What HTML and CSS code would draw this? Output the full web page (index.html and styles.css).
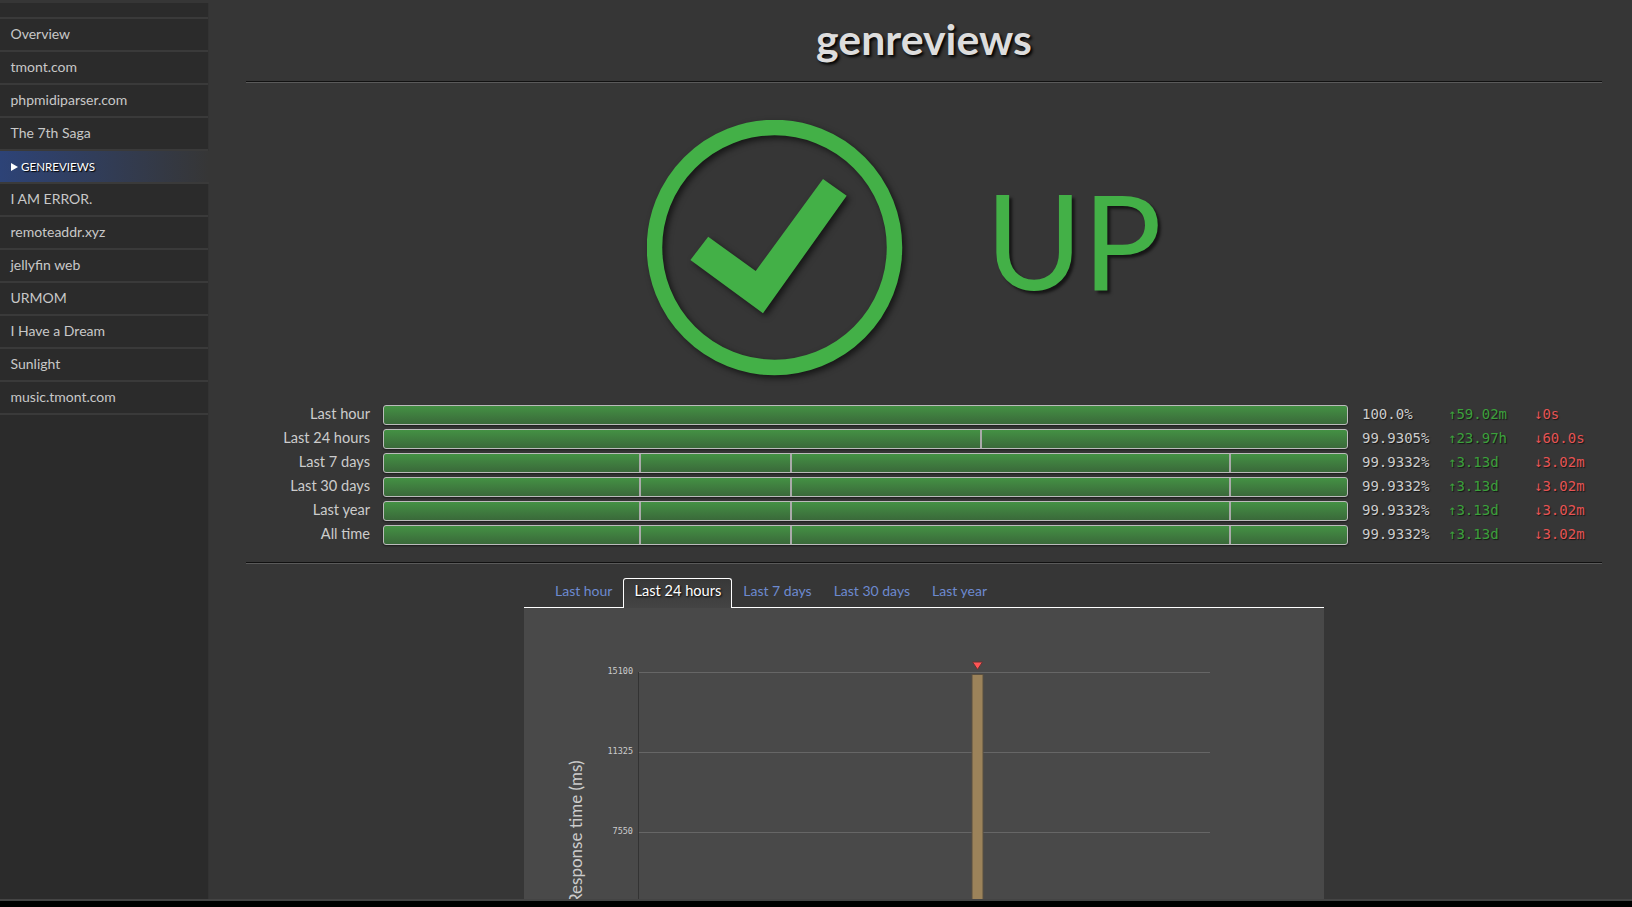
FILE: index.html
```html
<!DOCTYPE html>
<html lang="en">
<head>
<meta charset="utf-8">
<title>genreviews</title>
<link rel="stylesheet" href="styles.css">
</head>
<body>
<div class="app">
  <nav class="sidebar">
    <div class="nav-stub"></div>
    <a class="nav-item">Overview</a>
    <a class="nav-item">tmont.com</a>
    <a class="nav-item">phpmidiparser.com</a>
    <a class="nav-item">The 7th Saga</a>
    <a class="nav-item nav-active"><span class="nav-arrow"></span>GENREVIEWS</a>
    <a class="nav-item">I AM ERROR.</a>
    <a class="nav-item">remoteaddr.xyz</a>
    <a class="nav-item">jellyfin web</a>
    <a class="nav-item">URMOM</a>
    <a class="nav-item">I Have a Dream</a>
    <a class="nav-item">Sunlight</a>
    <a class="nav-item">music.tmont.com</a>
  </nav>
  <main class="main">
    <h1 class="title">genreviews</h1>
    <div class="rule"></div>
    <section class="status">
      <svg class="status-icon" width="256" height="256" viewBox="0 0 256 256">
        <circle cx="127.5" cy="127.5" r="120" fill="none" stroke="#43b047" stroke-width="15.5"/>
        <path fill="#43b047" d="M176 59 L199.700 75.700 L116 193.300 L43.400 140 L61.200 116.700 L108.700 151 Z"/>
      </svg>
      <div class="status-text">UP</div>
    </section>
    <section class="stats">
      <div class="stat-label">Last hour</div>
      <div class="stat-bar"></div>
      <div class="stat-pct">100.0%</div>
      <div class="stat-up">↑59.02m</div>
      <div class="stat-down">↓0s</div>

      <div class="stat-label">Last 24 hours</div>
      <div class="stat-bar"><i class="tick" style="left:61.9%"></i></div>
      <div class="stat-pct">99.9305%</div>
      <div class="stat-up">↑23.97h</div>
      <div class="stat-down">↓60.0s</div>

      <div class="stat-label">Last 7 days</div>
      <div class="stat-bar"><i class="tick" style="left:26.45%"></i><i class="tick" style="left:42.15%"></i><i class="tick" style="left:87.75%"></i></div>
      <div class="stat-pct">99.9332%</div>
      <div class="stat-up">↑3.13d</div>
      <div class="stat-down">↓3.02m</div>

      <div class="stat-label">Last 30 days</div>
      <div class="stat-bar"><i class="tick" style="left:26.45%"></i><i class="tick" style="left:42.15%"></i><i class="tick" style="left:87.75%"></i></div>
      <div class="stat-pct">99.9332%</div>
      <div class="stat-up">↑3.13d</div>
      <div class="stat-down">↓3.02m</div>

      <div class="stat-label">Last year</div>
      <div class="stat-bar"><i class="tick" style="left:26.45%"></i><i class="tick" style="left:42.15%"></i><i class="tick" style="left:87.75%"></i></div>
      <div class="stat-pct">99.9332%</div>
      <div class="stat-up">↑3.13d</div>
      <div class="stat-down">↓3.02m</div>

      <div class="stat-label">All time</div>
      <div class="stat-bar"><i class="tick" style="left:26.45%"></i><i class="tick" style="left:42.15%"></i><i class="tick" style="left:87.75%"></i></div>
      <div class="stat-pct">99.9332%</div>
      <div class="stat-up">↑3.13d</div>
      <div class="stat-down">↓3.02m</div>
    </section>
    <div class="rule rule-lower"></div>
    <section class="chart-wrap">
      <div class="tabs">
        <a class="tab">Last hour</a>
        <a class="tab tab-active">Last 24 hours</a>
        <a class="tab">Last 7 days</a>
        <a class="tab">Last 30 days</a>
        <a class="tab">Last year</a>
      </div>
      <div class="panel">
        <svg class="chart" width="800" height="600" viewBox="0 0 800 600">
          <g class="grid">
            <line x1="115" x2="686" y1="64.500" y2="64.500"/>
            <line x1="115" x2="686" y1="144.500" y2="144.500"/>
            <line x1="115" x2="686" y1="224.500" y2="224.500"/>
          </g>
          <line class="axis" x1="114.500" x2="114.500" y1="64" y2="600"/>
          <rect class="bar" x="448" y="66.500" width="11" height="534"/>
          <path class="marker" d="M448.500 54 H458.500 L453.500 61.500 Z"/>
          <g class="y-ticks">
            <text x="109" y="66">15100</text>
            <text x="109" y="146">11325</text>
            <text x="109" y="226">7550</text>
          </g>
          <text class="y-title" transform="translate(57.500 296) rotate(-90)">Response time (ms)</text>
        </svg>
      </div>
    </section>
  </main>
</div>
</body>
</html>
```
FILE: styles.css
```css
* { box-sizing: border-box; }
html, body { margin: 0; height: 100%; background: #000; overflow: hidden; }
body { font-family: Lato, "Open Sans", sans-serif; color: #ccc; }

.app {
  display: flex;
  height: 901px;
  background: #363636;
  border-bottom: 2px solid #444;
  overflow: hidden;
}

/* sidebar */
.sidebar {
  flex: 0 0 209px;
  margin-top: 3px;
  background: #2b2b2b;
  border-right: 1px solid #333;
  display: flex;
  flex-direction: column;
}
.nav-stub { height: 16px; border-bottom: 2px solid #3a3a3a; flex: none; }
.nav-item {
  flex: none;
  height: 33px;
  padding-left: 10.500px;
  border-bottom: 2px solid #3a3a3a;
  font-size: 14px;
  line-height: 30px;
  color: #c8c8c8;
}
.nav-active {
  display: flex;
  align-items: center;
  color: #fff;
  font-size: 11.600px;
  line-height: 32px;
  background: linear-gradient(to right, #2d4377, #363636);
  margin-right: -1px;
  text-shadow: 1px 1px 1px #000;
}
.nav-arrow {
  width: 0;
  height: 0;
  margin-right: 3.500px;
  border-left: 7px solid #fff;
  border-top: 4px solid transparent;
  border-bottom: 4px solid transparent;
}

/* main */
.main {
  flex: 1;
  min-width: 0;
  padding: 0 30px 0 37px;
}
.title {
  margin: 0;
  height: 81px;
  padding-top: 11px;
  font-size: 42.800px;
  line-height: 56px;
  font-weight: 700;
  text-align: center;
  color: #ddd;
  text-shadow: 2px 2px 3px #000;
}
.rule { height: 2px; border-top: 1px solid #111; border-bottom: 1px solid #5a5a5a; }
.rule-lower { margin-top: 13px; }

.status {
  display: flex;
  align-items: flex-start;
  height: 322px;
  padding: 37px 0 0 400.500px;
}
.status-icon { filter: drop-shadow(3px 3px 3px rgba(0,0,0,.6)); flex: none; }
.status-text {
  margin: 39px 0 0 83px;
  font-size: 132px;
  line-height: 160px;
  color: #43b047;
  text-shadow: 3px 3px 3px rgba(0,0,0,.6);
}

.stats {
  display: grid;
  grid-template-columns: 124px 992px 86px 86px 1fr;
  grid-auto-rows: 24px;
}
.stat-label {
  text-align: right;
  line-height: 18px;
  font-size: 14.600px;
  color: #ccc;
}
.stat-bar {
  position: relative;
  height: 20px;
  margin: 0 14px 0 13px;
  border: 1px solid #bbb;
  border-radius: 3px;
  background: linear-gradient(to bottom, #449144, #3a693a);
  box-shadow: 0 1px 2px rgba(0,0,0,.5);
  overflow: hidden;
}
.tick { position: absolute; top: 0; bottom: 0; width: 2px; background: #aaa; }
.stat-pct, .stat-up, .stat-down {
  font-family: "DejaVu Sans Mono", "Liberation Mono", monospace;
  font-size: 14px;
  line-height: 19px;
  text-shadow: 1px 1px 1px rgba(0,0,0,.6);
}
.stat-up { color: #3ca03c; }
.stat-down { color: #e55454; }

/* chart */
.chart-wrap { width: 800px; margin: 14px auto 0; }
.tabs {
  display: flex;
  height: 30px;
  padding-left: 20px;
  border-bottom: 1px solid #fff;
  font-size: 14px;
}
.tab { padding: 0 10px; line-height: 24px; color: #6d8ad0; height: 30px; border: 1px solid transparent; border-bottom: 0; }
.tab-active {
  color: #fff;
  font-size: 14.600px;
  background: linear-gradient(to bottom, #383838, #444);
  border-color: #fff;
  border-bottom: 0;
  border-radius: 3px 3px 0 0;
  text-shadow: 1px 1px 2px #000;
}
.panel { height: 293px; background: #494949; overflow: hidden; }
.chart { display: block; }
.grid line { stroke: #666; stroke-width: 1; }
.axis { stroke: #333; stroke-width: 1; }
.bar { fill: #9c835a; stroke: #5a5040; stroke-width: 1; }
.marker { fill: #f55; stroke: #633; stroke-width: 1; }
.y-ticks text { font-family: "DejaVu Sans Mono", monospace; font-size: 8.500px; fill: #ccc; text-anchor: end; }
.y-title { font-family: Lato, sans-serif; font-size: 17px; fill: #ccc; }
```
